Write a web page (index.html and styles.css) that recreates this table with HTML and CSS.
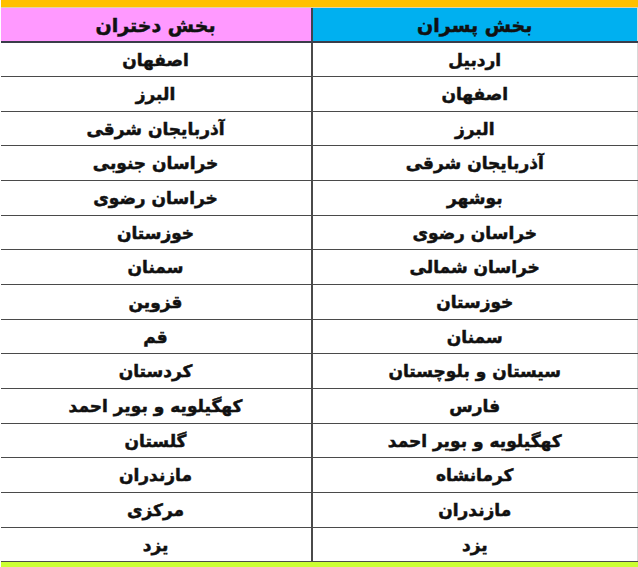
FILE: index.html
```html
<!DOCTYPE html>
<html lang="fa" dir="rtl">
<head>
<meta charset="utf-8">
<link rel="stylesheet" href="styles.css">
</head>
<body>
<div class="strip-top"></div>
<table class="sheet">
  <colgroup><col class="c-boys"><col class="c-girls"></colgroup>
  <thead>
    <tr><th class="boys">بخش پسران</th><th class="girls">بخش دختران</th></tr>
  </thead>
  <tbody>
    <tr><td>اردبیل</td><td>اصفهان</td></tr>
    <tr><td>اصفهان</td><td>البرز</td></tr>
    <tr><td>البرز</td><td>آذربایجان شرقی</td></tr>
    <tr><td>آذربایجان شرقی</td><td>خراسان جنوبی</td></tr>
    <tr><td>بوشهر</td><td>خراسان رضوی</td></tr>
    <tr><td>خراسان رضوی</td><td>خوزستان</td></tr>
    <tr><td>خراسان شمالی</td><td>سمنان</td></tr>
    <tr><td>خوزستان</td><td>قزوین</td></tr>
    <tr><td>سمنان</td><td>قم</td></tr>
    <tr><td>سیستان و بلوچستان</td><td>کردستان</td></tr>
    <tr><td>فارس</td><td>کهگیلویه و بویر احمد</td></tr>
    <tr><td>کهگیلویه و بویر احمد</td><td>گلستان</td></tr>
    <tr><td>کرمانشاه</td><td>مازندران</td></tr>
    <tr><td>مازندران</td><td>مرکزی</td></tr>
    <tr><td>یزد</td><td>یزد</td></tr>
  </tbody>
</table>
<div class="strip-bottom"></div>
</body>
</html>
```
FILE: styles.css
```css
html, body {
  margin: 0;
  padding: 0;
  background: #ffffff;
}
body {
  width: 638px;
  height: 567px;
  overflow: hidden;
  font-family: "DejaVu Sans", "Noto Sans", sans-serif;
}
.strip-top {
  height: 7px;
  width: 637px;
  background: #ffc000;
  border-bottom: 1px solid #e0d3a8;
}
.sheet {
  width: 637px;
  border-collapse: collapse;
  table-layout: fixed;
  direction: rtl;
}
.c-boys { width: 326px; }
.c-girls { width: 311px; }
.sheet th {
  height: 33px;
  padding: 0;
  font-size: 19px;
  font-weight: bold;
  color: #111;
  -webkit-text-stroke: 0.5px #111;
  border-bottom: 2px solid #3a3d4a;
  text-align: center;
}
.sheet th.boys {
  background: #00b0f0;
  border-left: 2px solid #3d4450;
  border-right: 1px solid #d8d8d8;
}
.sheet th.girls {
  background: #ff99ff;
}
.sheet tbody tr {
  height: 34.67px;
}
.sheet td {
  padding: 0;
  font-size: 17px;
  font-weight: bold;
  color: #111;
  -webkit-text-stroke: 0.5px #111;
  text-align: center;
  border-bottom: 1.6px solid #4a4a4a;
}
.sheet td:first-child {
  border-left: 2px solid #4a4a4a;
  border-right: 1px solid #d8d8d8;
}
.strip-bottom {
  height: 8px;
  width: 637px;
  background: #ccff33;
}
```
